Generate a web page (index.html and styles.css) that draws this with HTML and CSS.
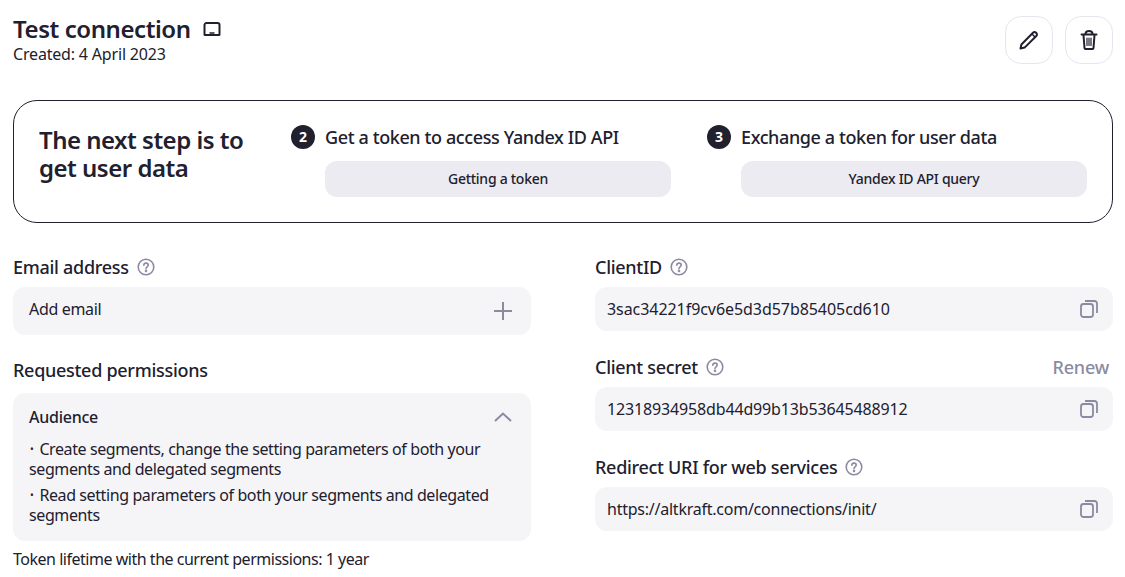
FILE: index.html
```html
<!DOCTYPE html>
<html lang="en">
<head>
<meta charset="utf-8">
<title>Test connection</title>
<link rel="stylesheet" href="styles.css">
</head>
<body>
<main class="page">
  <header class="head">
    <div class="head-text">
      <h1 class="title">Test connection
        <svg class="laptop" viewBox="0 0 18 14" width="18" height="14" fill="none" stroke="#21202e" stroke-width="2" stroke-linejoin="round"><path d="M3.500 1h11A2 2 0 0 1 16.500 3v9.500a.5.5 0 0 1-.5.5H2a.5.5 0 0 1-.5-.5V3A2 2 0 0 1 3.500 1z"/><path d="M6.500 11h5" stroke-width="1.500"/></svg>
      </h1>
      <p class="created">Created: 4 April 2023</p>
    </div>
    <div class="actions">
      <button class="icon-btn" aria-label="Edit"><svg viewBox="0 0 20 20" width="20" height="20" fill="none" stroke="#21202e" stroke-width="2" stroke-linejoin="round"><path d="M1.500 18.500l.9-4L14 2.700a2.100 2.100 0 0 1 3 0l.3.3a2.100 2.100 0 0 1 0 3L5.600 17.600z"/><path d="M13 4l3 3" stroke-width="1.500"/></svg></button>
      <button class="icon-btn" aria-label="Delete"><svg viewBox="0 0 20 22" width="20" height="22" fill="none" stroke="#21202e" stroke-width="2" stroke-linecap="round" stroke-linejoin="round"><path d="M2.500 5.500h15"/><path d="M6.500 5C6.500 2.800 7.800 2 10 2s3.500.8 3.500 3"/><path d="M4.500 6l1 13c0 .6.4 1 1 1h7c.6 0 1-.4 1-1l1-13"/><path d="M8 9v7.500M12 9v7.500M10 9v7.500" stroke-width="1.200"/></svg></button>
    </div>
  </header>

  <section class="steps">
    <h2 class="steps-title">The next step is to get user data</h2>
    <div class="step">
      <div class="step-head"><span class="num">2</span><span class="step-name">Get a token to access Yandex ID API</span></div>
      <button class="step-btn">Getting a token</button>
    </div>
    <div class="step">
      <div class="step-head"><span class="num">3</span><span class="step-name">Exchange a token for user data</span></div>
      <button class="step-btn">Yandex ID API query</button>
    </div>
  </section>

  <section class="cols">
    <div class="col">
      <div class="label-row"><span class="label">Email address</span>
        <svg class="help" viewBox="0 0 18 18" width="18" height="18" fill="none" stroke="#8b8aa0" stroke-width="1.600"><circle cx="9" cy="9" r="7.800"/><path d="M6.800 7.200C6.800 5.900 7.800 5.100 9 5.100s2.200.8 2.200 2c0 1.700-2.200 1.700-2.200 3.400" stroke-linecap="round"/><circle cx="9" cy="12.900" r=".5"/></svg>
      </div>
      <div class="add-field"><span>Add email</span>
        <svg viewBox="0 0 20 20" width="20" height="20" fill="none" stroke="#8b8aa0" stroke-width="2"><path d="M10 1v18M1 10h18"/></svg>
      </div>
      <h3 class="label perm-title">Requested permissions</h3>
      <div class="perm">
        <div class="perm-head"><span class="perm-name">Audience</span>
          <svg viewBox="0 0 18 10" width="18" height="10" fill="none" stroke="#8b8aa0" stroke-width="2"><path d="M1 9l8-7.500L17 9"/></svg>
        </div>
        <ul class="perm-list">
          <li>Create segments, change the setting parameters of both your segments and delegated segments</li>
          <li>Read setting parameters of both your segments and delegated segments</li>
        </ul>
      </div>
      <p class="lifetime">Token lifetime with the current permissions: 1 year</p>
    </div>

    <div class="col">
      <div class="label-row"><span class="label">ClientID</span>
        <svg class="help" viewBox="0 0 18 18" width="18" height="18" fill="none" stroke="#8b8aa0" stroke-width="1.600"><circle cx="9" cy="9" r="7.800"/><path d="M6.800 7.200C6.800 5.900 7.800 5.100 9 5.100s2.200.8 2.200 2c0 1.700-2.200 1.700-2.200 3.400" stroke-linecap="round"/><circle cx="9" cy="12.900" r=".5"/></svg>
      </div>
      <div class="copy-field"><span class="val-id">3sac34221f9cv6e5d3d57b85405cd610</span>
        <svg viewBox="0 0 18 18" width="18" height="18" fill="none" stroke="#8b8aa0" stroke-width="1.800"><rect x="1" y="4" width="12" height="13" rx="2.500"/><path d="M5 1h9.500A2.500 2.500 0 0 1 17 3.500V13"/></svg>
      </div>
      <div class="label-row gap-top"><span class="label">Client secret</span>
        <svg class="help" viewBox="0 0 18 18" width="18" height="18" fill="none" stroke="#8b8aa0" stroke-width="1.600"><circle cx="9" cy="9" r="7.800"/><path d="M6.800 7.200C6.800 5.900 7.800 5.100 9 5.100s2.200.8 2.200 2c0 1.700-2.200 1.700-2.200 3.400" stroke-linecap="round"/><circle cx="9" cy="12.900" r=".5"/></svg>
        <span class="renew">Renew</span>
      </div>
      <div class="copy-field"><span class="val-secret">12318934958db44d99b13b53645488912</span>
        <svg viewBox="0 0 18 18" width="18" height="18" fill="none" stroke="#8b8aa0" stroke-width="1.800"><rect x="1" y="4" width="12" height="13" rx="2.500"/><path d="M5 1h9.500A2.500 2.500 0 0 1 17 3.500V13"/></svg>
      </div>
      <div class="label-row gap-top"><span class="label">Redirect URI for web services</span>
        <svg class="help" viewBox="0 0 18 18" width="18" height="18" fill="none" stroke="#8b8aa0" stroke-width="1.600"><circle cx="9" cy="9" r="7.800"/><path d="M6.800 7.200C6.800 5.900 7.800 5.100 9 5.100s2.200.8 2.200 2c0 1.700-2.200 1.700-2.200 3.400" stroke-linecap="round"/><circle cx="9" cy="12.900" r=".5"/></svg>
      </div>
      <div class="copy-field"><span class="val-url">https://altkraft.com/connections/init/</span>
        <svg viewBox="0 0 18 18" width="18" height="18" fill="none" stroke="#8b8aa0" stroke-width="1.800"><rect x="1" y="4" width="12" height="13" rx="2.500"/><path d="M5 1h9.500A2.500 2.500 0 0 1 17 3.500V13"/></svg>
      </div>
    </div>
  </section>
</main>
</body>
</html>
```

FILE: styles.css
```css
* { box-sizing: border-box; }
html, body { margin: 0; padding: 0; background: #fff; overflow: hidden; }
body {
  font-family: "Noto Sans", "Liberation Sans", sans-serif;
  color: #21202e;
  font-size: 16px;
  line-height: 20px;
}
.page { padding: 16px 12px 0 13px; }
.head { display: flex; justify-content: space-between; height: 84px; }
.title {
  margin: 0;
  font-size: 24px;
  line-height: 26px;
  font-weight: 600;
  display: flex;
  align-items: center;
  gap: 12px;
  letter-spacing: -0.43px;
}
.created { margin: 2px 0 0; font-size: 16px; line-height: 20px; letter-spacing: -0.18px; }
.actions { display: flex; gap: 12px; }
.icon-btn {
  width: 48px;
  height: 48px;
  border: 1px solid #e6e6ef;
  border-radius: 16px;
  background: #fff;
  display: flex;
  align-items: center;
  justify-content: center;
  padding: 0;
}
.steps {
  height: 123px;
  border: 1px solid #21202e;
  border-radius: 24px;
  padding: 25px 25px 25px 25px;
  display: flex;
}
.steps-title {
  margin: 0;
  flex: none;
  width: 252px;
  font-size: 24px;
  line-height: 28px;
  font-weight: 600;
  letter-spacing: -0.5px;
  padding-right: 30px;
}
.step { flex: none; width: 396px; margin-right: 20px; }
.step-head { display: flex; align-items: center; gap: 10px; height: 22px; }
.num {
  width: 24px;
  height: 24px;
  border-radius: 50%;
  background: #21202e;
  color: #fff;
  font-size: 14px;
  font-weight: 700;
  display: flex;
  align-items: center;
  justify-content: center;
  flex: none;
}
.step-name { font-size: 18px; font-weight: 500; letter-spacing: -0.39px; white-space: nowrap; }
.step-btn {
  display: block;
  width: 346px;
  height: 36px;
  margin: 13px 0 0 34px;
  border: 0;
  border-radius: 12px;
  background: #ebebf1;
  color: #21202e;
  font: 500 14px/20px "Noto Sans", "Liberation Sans", sans-serif;
  letter-spacing: -0.27px;
}
.cols { display: flex; gap: 64px; margin-top: 34px; }
.col { width: 518px; flex: none; }
.label-row { display: flex; align-items: center; gap: 8px; height: 20px; margin-bottom: 10px; }
.label { font-size: 18px; line-height: 20px; font-weight: 500; letter-spacing: -0.29px; }
.gap-top { margin-top: 26px; }
.renew { margin-left: auto; margin-right: 4px; color: #8b8aa0; font-size: 18px; font-weight: 500; letter-spacing: -0.2px; }
.add-field, .copy-field {
  background: #f5f5f8;
  border-radius: 12px;
  display: flex;
  align-items: center;
  justify-content: space-between;
  font-size: 16px;
}
.add-field { height: 48px; padding: 0 18px 4px 16px; letter-spacing: -0.33px; }
.add-field svg { margin-top: 4px; }
.copy-field { height: 44px; padding: 0 15px 0 12px; }
.val-id { letter-spacing: -0.06px; }
.val-secret { letter-spacing: -0.15px; }
.val-url { letter-spacing: -0.24px; }
.perm-title { margin: 25px 0 13px; }
.perm { height: 148px; background: #f5f5f8; border-radius: 12px; padding: 14px 19px 0 16px; }
.perm-head { display: flex; justify-content: space-between; align-items: center; height: 20px; }
.perm-name { font-size: 16px; font-weight: 500; letter-spacing: -0.25px; }
.perm-list { list-style: none; margin: 12px 0 0; padding: 0 20px 0 0; font-size: 16px; line-height: 20px; letter-spacing: -0.4px; }
.perm-list li { margin-bottom: 6px; }
.perm-list li::before { content: "•"; font-size: 10px; margin: 0 6px 0 1px; vertical-align: 2px; }
.lifetime { margin: 8px 0 0; font-size: 16px; line-height: 20px; letter-spacing: -0.48px; }
```
